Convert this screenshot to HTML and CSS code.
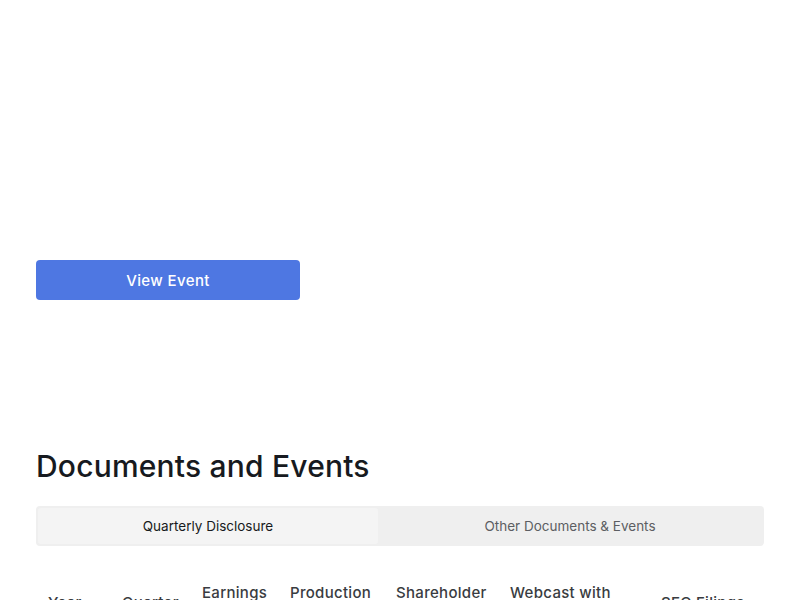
FILE: index.html
```html
<!DOCTYPE html>
<html>
<head>
<meta charset="utf-8">
<link rel="stylesheet" href="styles.css">
</head>
<body>
<main class="page">
  <section class="event">
    <a class="btn" href="#">View Event</a>
  </section>
  <section class="docs">
    <h2 class="title">Documents and Events</h2>
    <div class="tabs">
      <div class="tab active">Quarterly Disclosure</div>
      <div class="tab">Other Documents &amp; Events</div>
    </div>
    <table class="grid">
      <thead>
        <tr>
          <th class="c-year">Year</th>
          <th class="c-q">Quarter</th>
          <th class="c-earn">Earnings<br>Release</th>
          <th class="c-prod">Production<br>Report</th>
          <th class="c-share">Shareholder<br>Deck</th>
          <th class="c-web">Webcast with<br>Q&amp;A</th>
          <th class="c-sec">SEC Filings</th>
        </tr>
      </thead>
    </table>
  </section>
</main>
</body>
</html>
```

FILE: styles.css
```css
html, body {
  margin: 0;
  padding: 0;
  background: #ffffff;
}
body {
  font-family: "Inter", "Liberation Sans", sans-serif;
  color: #171a20;
}
.page {
  padding: 0 36px;
}
.event {
  padding-top: 260px;
}
.btn {
  display: flex;
  align-items: center;
  justify-content: center;
  width: 264px;
  height: 40px;
  background: #4e77e2;
  border-radius: 4px;
  color: #ffffff;
  text-decoration: none;
  font-size: 15px;
  font-weight: 500;
  letter-spacing: 0.4px;
}
.docs {
  padding-top: 146px;
}
.title {
  margin: 0;
  font-size: 30px;
  font-weight: 500;
  line-height: 40px;
  color: #171a20;
  letter-spacing: 0.2px;
}
.tabs {
  margin-top: 20px;
  display: flex;
  background: #efefef;
  border-radius: 4px;
  padding: 2px;
  height: 40px;
  box-sizing: border-box;
}
.tab {
  flex: 1 1 0;
  display: flex;
  align-items: center;
  justify-content: center;
  font-size: 13.5px;
  color: #5c5e62;
  border-radius: 3px;
}
.tab.active {
  flex: 0 0 340px;
  background: #f4f4f4;
  color: #171a20;
}
.grid {
  margin-top: 37px;
  border-collapse: collapse;
  width: 728px;
  table-layout: fixed;
}
.grid th {
  text-align: left;
  font-weight: 500;
  font-size: 15px;
  line-height: 20px;
  letter-spacing: 0.3px;
  color: #393c41;
  padding: 0 12px;
  vertical-align: middle;
  white-space: nowrap;
}
.c-year { width: 50px; }
.c-q { width: 56px; }
.c-earn { width: 64px; }
.c-prod { width: 82px; }
.c-share { width: 90px; }
.c-web { width: 127px; }
.c-sec { width: auto; }
```
